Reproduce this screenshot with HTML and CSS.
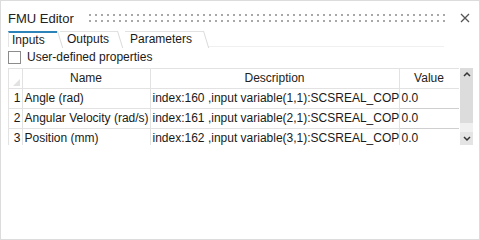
FILE: index.html
```html
<!DOCTYPE html>
<html lang="en">
<head>
  <meta charset="UTF-8">
  <meta name="viewport" content="width=device-width, initial-scale=1.0">
  <title>FMU Editor</title>
  <link rel="stylesheet" href="styles.css">
</head>
<body>
  <div class="panel">
    <div class="titlebar">
      <span class="title">FMU Editor</span>
      <span class="grip"></span>
      <span class="close">
        <svg width="10" height="10" viewBox="0 0 10 10"><path d="M1 1L9 9M9 1L1 9" stroke="#555" stroke-width="1.3" fill="none"/></svg>
      </span>
    </div>

    <div class="tabs">
      <div class="tab active">Inputs</div>
      <div class="tab">Outputs</div>
      <div class="tab">Parameters</div>
      <div class="tab-rest"></div>
    </div>

    <label class="check">
      <span class="box"></span>
      User-defined properties
    </label>

    <div class="grid-wrap">
      <div class="grid-view">
        <table class="grid">
          <colgroup>
            <col class="c-num">
            <col class="c-name">
            <col class="c-desc">
            <col class="c-val">
          </colgroup>
          <thead>
            <tr>
              <th class="corner"><span class="tri"></span></th>
              <th>Name</th>
              <th>Description</th>
              <th>Value</th>
            </tr>
          </thead>
          <tbody>
            <tr>
              <td class="num">1</td>
              <td>Angle (rad)</td>
              <td>index:160 ,input variable(1,1):SCSREAL_COP</td>
              <td class="val">0.0</td>
            </tr>
            <tr>
              <td class="num">2</td>
              <td>Angular Velocity (rad/s)</td>
              <td>index:161 ,input variable(2,1):SCSREAL_COP</td>
              <td class="val">0.0</td>
            </tr>
            <tr>
              <td class="num">3</td>
              <td>Position (mm)</td>
              <td>index:162 ,input variable(3,1):SCSREAL_COP</td>
              <td class="val">0.0</td>
            </tr>
          </tbody>
        </table>
      </div>
      <div class="scrollbar">
        <div class="sb-btn up">
          <svg width="8" height="6" viewBox="0 0 8 6"><path d="M1 5L4 2L7 5" stroke="#333" stroke-width="1.5" fill="none"/></svg>
        </div>
        <div class="sb-thumb"></div>
        <div class="sb-track"></div>
        <div class="sb-btn down">
          <svg width="8" height="6" viewBox="0 0 8 6"><path d="M1 1L4 4L7 1" stroke="#333" stroke-width="1.5" fill="none"/></svg>
        </div>
      </div>
    </div>
  </div>
</body>
</html>
```

FILE: styles.css
```css
body {
  margin: 0;
  padding: 0;
  background-color: #fff;
  font-family: "Liberation Sans", Arial, sans-serif;
  font-size: 12px;
  color: #1a1a1a;
}

.panel {
  width: 480px;
  height: 240px;
  box-sizing: border-box;
  border: 1px solid #dcdcdc;
  padding: 0 7px;
  background-color: #fff;
}

.titlebar {
  display: flex;
  align-items: center;
  height: 22px;
  padding-top: 6px;
}

.title {
  font-size: 13px;
  color: #222;
  margin-right: 15px;
}

.grip {
  flex: 1;
  height: 8px;
  margin-right: 11px;
  background:
    linear-gradient(90deg, #a8a8a8 2px, transparent 0) 0 0 / 6px 2px repeat-x,
    linear-gradient(90deg, #a8a8a8 2px, transparent 0) 0 6px / 6px 2px repeat-x;
}

.close {
  width: 10px;
  height: 10px;
  margin-right: 2px;
  display: flex;
}

.tabs {
  display: flex;
  height: 16px;
  margin-top: 2px;
}

.tab {
  position: relative;
  height: 15px;
  line-height: 15px;
  padding: 0 4px;
  border-top: 1px solid #e2e2e2;
  color: #1a1a1a;
}

.tab::after {
  content: "";
  position: absolute;
  top: -1px;
  right: -1px;
  width: 1px;
  height: 17px;
  background-color: #dadada;
  transform: skewX(17deg);
  transform-origin: top left;
}

.tab.active {
  width: 41px;
  padding-left: 3px;
  border-top: 2px solid #2b83ba;
  border-left: 1px solid #e4e4e4;
  height: 14px;
}

.tab.active::after {
  top: -2px;
}

.tab:nth-child(2) {
  width: 46px;
  margin-left: 3px;
  padding-left: 7px;
}

.tab:nth-child(3) {
  width: 69px;
  margin-left: 8px;
  padding-left: 5px;
}

.tab-rest {
  width: 236px;
  margin-left: 5px;
  align-self: flex-end;
  border-bottom: 1px solid #f0f0f0;
}

.check {
  display: flex;
  align-items: center;
  height: 18px;
  margin-top: 1px;
  gap: 6px;
}

.box {
  width: 11px;
  height: 11px;
  border: 1px solid #8c8c8c;
  background-color: #fff;
}

.grid-wrap {
  display: flex;
  margin-top: 2px;
  height: 77px;
  width: 465px;
}

.grid-view {
  width: 451px;
  height: 77px;
  overflow: hidden;
  border-left: 1px solid #e2e2e2;
  border-top: 1px solid #e2e2e2;
  box-sizing: border-box;
}

.grid {
  border-collapse: collapse;
  table-layout: fixed;
  width: 450px;
}

.c-num { width: 13px; }
.c-name { width: 128px; }
.c-desc { width: 249px; }
.c-val { width: 60px; }

.grid th,
.grid td {
  height: 20px;
  padding: 0 2px;
  border-right: 1px solid #e2e2e2;
  border-bottom: 1px solid #e2e2e2;
  white-space: nowrap;
  overflow: hidden;
  font-weight: normal;
  text-align: left;
  box-sizing: border-box;
}

.grid th {
  height: 19px;
  text-align: center;
  color: #222;
}

.grid td.num {
  padding: 0 1px 0 0;
  text-align: right;
}

.grid td.val {
  border-left: 1px solid #cfcfcf;
  border-bottom: 1px solid #cfcfcf;
}

.corner {
  position: relative;
}

.tri {
  position: absolute;
  right: 2px;
  bottom: 2px;
  width: 0;
  height: 0;
  border-left: 7px solid transparent;
  border-bottom: 7px solid #e2e2e2;
}

.scrollbar {
  width: 13px;
  margin-left: 1px;
  display: flex;
  flex-direction: column;
  background-color: #f0f0f0;
}

.sb-btn {
  height: 12px;
  display: flex;
  align-items: center;
  justify-content: center;
  background-color: #dcdcdc;
}

.sb-btn.down {
  height: 13px;
  background-color: #e4e4e4;
}

.sb-thumb {
  height: 43px;
  background-color: #dcdcdc;
}

.sb-track {
  flex: 1;
}
```
